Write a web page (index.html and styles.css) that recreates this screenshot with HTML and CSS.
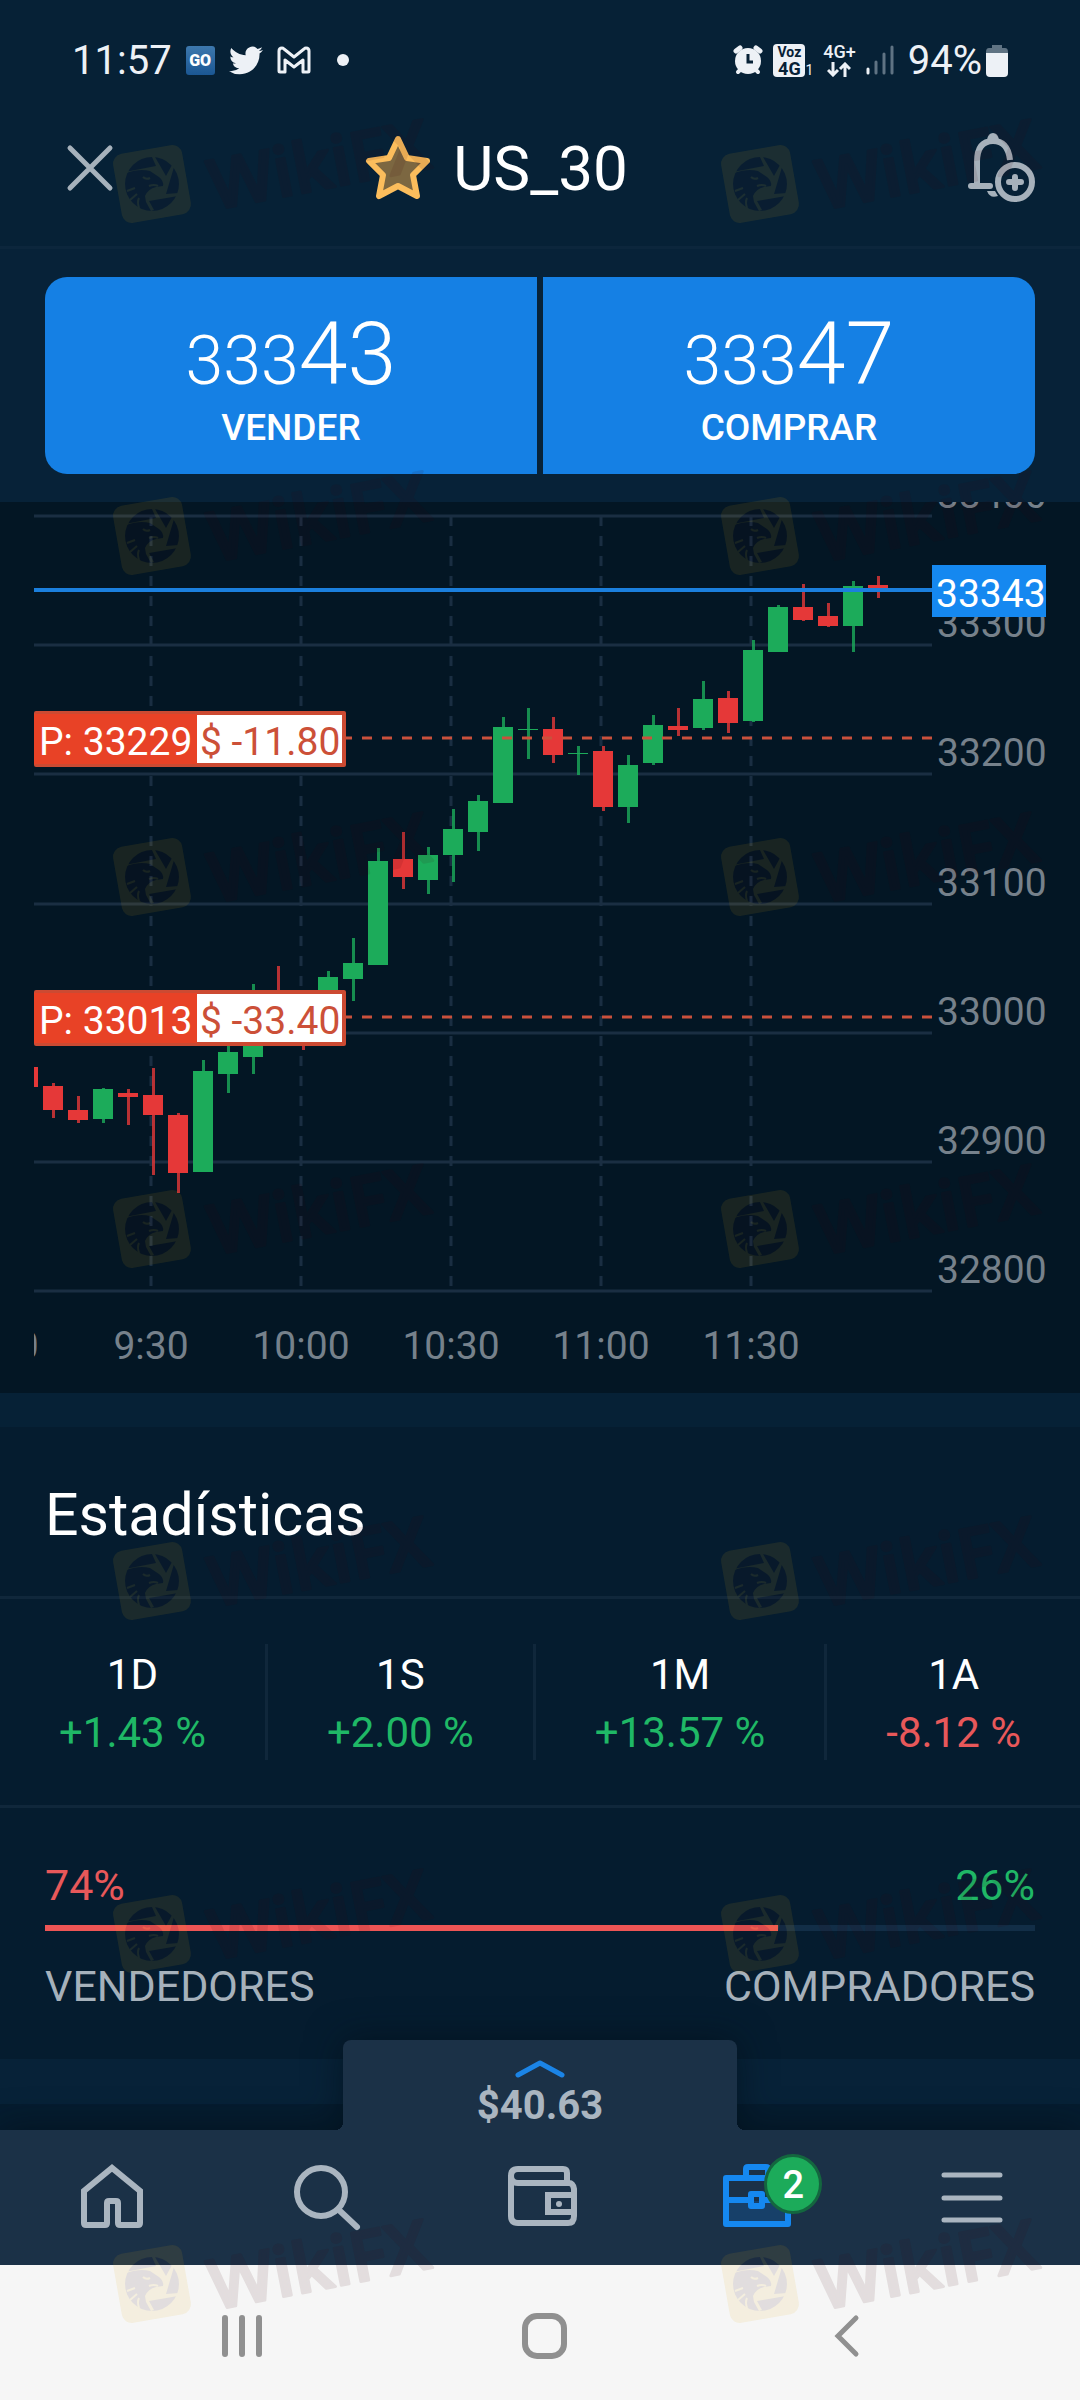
FILE: index.html
```html
<!DOCTYPE html>
<html lang="es">
<head>
    <meta charset="UTF-8">
    <meta name="viewport" content="width=device-width, initial-scale=1.0">
    <title>US_30</title>
    <link rel="stylesheet" href="styles.css">
</head>
<body>
    <div class="status-bar">
        <div class="status-left">
            <span class="clock">11:57</span>
            <span class="go-icon">GO</span>
            <svg class="twitter-icon" viewBox="0 2 24 20" width="34" height="29"><path fill="#edf1f6" d="M23.953 4.57a10 10 0 01-2.825.775 4.958 4.958 0 002.163-2.723c-.951.555-2.005.959-3.127 1.184a4.92 4.92 0 00-8.384 4.482C7.69 8.095 4.067 6.13 1.64 3.162a4.822 4.822 0 00-.666 2.475c0 1.71.87 3.213 2.188 4.096a4.904 4.904 0 01-2.228-.616v.06a4.923 4.923 0 003.946 4.827 4.996 4.996 0 01-2.212.085 4.936 4.936 0 004.604 3.417 9.867 9.867 0 01-6.102 2.105c-.39 0-.779-.023-1.17-.067a13.995 13.995 0 007.557 2.209c9.053 0 13.998-7.496 13.998-13.985 0-.21 0-.42-.015-.63A9.935 9.935 0 0024 4.59z"/></svg>
            <svg class="gmail-icon" viewBox="0 0 34 28" width="34" height="28"><path fill="none" stroke="#edf1f6" stroke-width="3" stroke-linejoin="round" d="M2 5Q2 2 5 2Q6 2 7 3L17 11L27 3Q28 2 29 2Q32 2 32 5V25Q32 26 31 26H26V14L17 21L8 14V26H3Q2 26 2 25Z"/></svg>
            <span class="dot"></span>
        </div>
        <div class="status-right">
            <svg viewBox="0 0 30 30" width="30" height="30"><g fill="none" stroke="#edf1f6" stroke-width="5" stroke-linecap="round"><path d="M3 6L7 3M27 6L23 3"/><path stroke-width="4" d="M5 27L8 24M25 27L22 24"/></g><circle cx="15" cy="16" r="13" fill="#edf1f6"/><path d="M15 9V17H20" fill="none" stroke="#072136" stroke-width="3"/></svg>
            <span class="volte"><span class="volte-box"><span>Voz</span><span>4G</span></span><span class="volte-sim">1</span></span>
            <span class="net">4G+
                <svg viewBox="0 0 24 15" width="24" height="15"><path fill="none" stroke="#edf1f6" stroke-width="3" d="M6 0V13M1 8L6 13L11 8M18 15V2M13 7L18 2L23 7"/></svg>
            </span>
            <svg viewBox="0 0 28 30" width="28" height="30"><g stroke-width="3" stroke-linecap="round"><path stroke="#edf1f6" d="M2 24V28"/><path stroke="#5f7383" d="M10 17V28M18 9V28M26 2V28"/></g></svg>
            <span class="battery-text">94%<svg viewBox="0 0 22 33" width="22" height="33"><path fill="#5f7383" d="M6 1H16V4H19Q22 4 22 8V12H0V8Q0 4 3 4H6Z"/><path fill="#edf1f6" d="M0 9H22V29Q22 33 18 33H4Q0 33 0 29Z"/></svg></span>
        </div>
    </div>

    <header class="header">
        <button class="icon-button" aria-label="Cerrar">
            <svg viewBox="0 0 48 48" width="48" height="48"><path d="M4 4L44 44M44 4L4 44" stroke="#a6b1bb" stroke-width="5" stroke-linecap="round"/></svg>
        </button>
        <h1 class="title">
            <svg viewBox="0 0 66 66" width="66" height="66"><path d="M33 4L42 23L62 26L48 40L52 61L33 51L14 61L18 40L4 26L24 23Z" fill="#7c6741" stroke="#fbbd5c" stroke-width="6" stroke-linejoin="round"/></svg>
            US_30
        </h1>
        <button class="icon-button" aria-label="Crear alerta">
            <svg viewBox="0 0 70 70" width="70" height="70">
                <g fill="none" stroke="#a6b1bb" stroke-linecap="round">
                    <path stroke-width="6" stroke-linecap="butt" d="M43 27Q41 8 26 8Q10 8 10 29V52"/>
                    <path stroke-width="6" d="M4 53H23"/>
                    <circle cx="48" cy="49" r="17" stroke-width="6"/>
                    <path stroke-width="6" d="M48 44V55M42 49H54"/>
                </g>
                <path fill="#a6b1bb" d="M20 7Q21 0 26 0Q31 0 32 7ZM20 58H28L31 63Q23 66 20 58Z"/>
            </svg>
        </button>
    </header>

    <section class="quotes">
        <button class="quote">
            <span class="price">333<b>43</b></span>
            <span class="side">VENDER</span>
        </button>
        <button class="quote">
            <span class="price">333<b>47</b></span>
            <span class="side">COMPRAR</span>
        </button>
    </section>

    <section class="chart-panel">
        <svg id="chart" class="chart" viewBox="0 502 1080 891" role="img" aria-label="US_30">
            <defs>
                <clipPath id="plot"><rect x="34" y="502" width="900" height="891"/></clipPath>
            </defs>
            <g id="grid" class="grid"></g>
            <g id="candles" clip-path="url(#plot)"></g>
            <g id="axis" class="axis"></g>
            <g id="orders"></g>
            <path class="last-line" d="M34 590H932"/>
            <rect x="932" y="565" width="114" height="52" fill="#1588f0"/>
            <text class="last-price" x="936" y="607">33343</text>
        </svg>
    </section>

    <section class="stats">
        <h2>Estadísticas</h2>
        <ul class="periods">
            <li><span>1D</span><span class="up">+1.43 %</span></li>
            <li><span>1S</span><span class="up">+2.00 %</span></li>
            <li><span>1M</span><span class="up">+13.57 %</span></li>
            <li><span>1A</span><span class="down">-8.12 %</span></li>
        </ul>
        <div class="sentiment">
            <div class="sentiment-row"><span class="down">74%</span><span class="up">26%</span></div>
            <div class="track"><div class="track-fill" style="width: 74%"></div></div>
            <div class="sentiment-row muted"><span>VENDEDORES</span><span>COMPRADORES</span></div>
        </div>
    </section>
    <div class="spacer"></div>

    <nav class="tabs">
        <button class="balance">
            <svg viewBox="0 0 50 22" width="50" height="22"><path d="M3 18L25 6L47 18" fill="none" stroke="#1b84e6" stroke-width="5" stroke-linecap="round" stroke-linejoin="round"/></svg>
            $40.63
        </button>
        <a href="#" class="tab" aria-label="Inicio">
            <svg viewBox="0 0 68 68" width="68" height="68"><path d="M6 60V28L34 5L62 28V60Q62 62 60 62H42Q40 62 40 60V40Q40 38 38 38H31Q29 38 29 40V60Q29 62 27 62H8Q6 62 6 60Z" fill="none" stroke="#aab5c0" stroke-width="6"/></svg>
        </a>
        <a href="#" class="tab" aria-label="Buscar">
            <svg viewBox="0 0 68 68" width="68" height="68"><g fill="none" stroke="#aab5c0" stroke-width="6" stroke-linecap="round"><circle cx="28" cy="29" r="24"/><path d="M47 48L64 64"/></g></svg>
        </a>
        <a href="#" class="tab" aria-label="Cartera">
            <svg viewBox="0 0 70 68" width="70" height="68"><g fill="none" stroke="#aab5c0" stroke-width="6"><path d="M60 21V10Q60 6 56 6H11Q4 6 4 13Q4 20 11 20H62Q66 20 67 26V53Q67 60 61 60H11Q4 60 4 53V12"/><path d="M66 32H41V49H66"/></g><circle cx="52" cy="41" r="3" fill="#aab5c0"/></svg>
        </a>
        <a href="#" class="tab" aria-label="Operaciones">
            <svg viewBox="0 0 68 68" width="68" height="68"><path fill="#174069" d="M3 38H65V61H3Z"/><g fill="none" stroke="#1588f0" stroke-width="6" stroke-linejoin="round"><path d="M3 15H65V61H3ZM23 14V6Q23 4 25 4H43Q45 4 45 6V14M3 37H27M41 37H65"/><rect x="28" y="31" width="11" height="12"/></g></svg>
            <span class="badge">2</span>
        </a>
        <a href="#" class="tab" aria-label="Menú">
            <svg viewBox="0 0 68 68" width="68" height="68"><path d="M6 12H62M6 35H62M6 57H62" stroke="#aab5c0" stroke-width="5" stroke-linecap="round"/></svg>
        </a>
    </nav>

    <div class="system-bar">
        <button aria-label="Recientes"><svg viewBox="0 0 48 48" width="48" height="48"><path d="M7 6V42M24 6V42M41 6V42" stroke="#909090" stroke-width="6" stroke-linecap="round"/></svg></button>
        <button aria-label="Inicio"><svg viewBox="0 0 48 48" width="48" height="48"><rect x="5" y="4" width="39" height="40" rx="12" fill="none" stroke="#909090" stroke-width="6"/></svg></button>
        <button aria-label="Atrás"><svg viewBox="0 0 48 48" width="48" height="48"><path d="M34 6L16 24L34 42" fill="none" stroke="#909090" stroke-width="5" stroke-linecap="round"/></svg></button>
    </div>

    <svg class="watermark" viewBox="0 0 1080 2400" aria-hidden="true">
        <defs>
            <g id="mark">
                <rect x="14" y="9" width="70" height="70" rx="10" fill="#e4af14" transform="rotate(-10 49 44)"/>
                <circle cx="49" cy="44" r="27" fill="#2d050a"/>
                <!-- shutter blades and the opening behind the eagle -->
                <path fill="#e4af14" d="M22 32L53 26L49 17L52 17L63 36L69 25L71 27L63 54L76 53L75 56L46 61L51 70L48 71L43 62L42 56Q45 49 53 47L60 46Q61 41 56 37L47 31Q37 28 23 33Z"/>
                <path fill="none" stroke="#e4af14" stroke-width="2" d="M40 37Q43 40 47 38M46 46Q51 44 55 46M24 51L32 48M27 60L34 54M36 68Q34 62 36 58"/>
                <text class="mark-text" x="111" y="70" transform="rotate(-11 111 70)">WikiFX</text>
            </g>
        </defs>
        <g id="marks" opacity="0.1"></g>
    </svg>

    <script src="chart.js"></script>
</body>
</html>
```

FILE: styles.css
```css
* {
    margin: 0;
    padding: 0;
    box-sizing: border-box;
}

body {
    position: relative;
    min-height: 100vh;
    display: flex;
    flex-direction: column;
    font-family: Roboto, "Liberation Sans", sans-serif;
    background-color: #062136;
    color: #fff;
}

button {
    background: none;
    border: none;
    color: inherit;
    font-family: inherit;
    cursor: pointer;
}

a {
    color: inherit;
    text-decoration: none;
}

svg {
    display: block;
}

/* status bar */

.status-bar {
    display: flex;
    justify-content: space-between;
    height: 120px;
    padding: 0 72px;
    color: #edf1f6;
    font-size: 40px;
}

.status-left,
.status-right {
    display: flex;
    align-items: center;
}

.status-left {
    gap: 14px;
}

.status-right {
    gap: 10px;
}

.go-icon {
    width: 29px;
    height: 29px;
    border-radius: 3px;
    background: linear-gradient(#3d78ad, #1b5793);
    color: #fff;
    font-size: 16px;
    font-weight: 900;
    line-height: 29px;
    text-align: center;
}

.dot {
    width: 12px;
    height: 12px;
    margin-left: 12px;
    border-radius: 50%;
    background: #edf1f6;
}

.volte {
    display: flex;
    align-items: flex-end;
}

.volte-box {
    display: flex;
    flex-direction: column;
    align-items: center;
    width: 32px;
    height: 33px;
    border-radius: 4px;
    background: #edf1f6;
    color: #072136;
    font-size: 14px;
    font-weight: 700;
    line-height: 16px;
}

.volte-box span + span {
    font-size: 18px;
    line-height: 17px;
}

.volte-sim {
    font-size: 14px;
    line-height: 14px;
}

.net {
    display: flex;
    flex-direction: column;
    align-items: center;
    gap: 2px;
    font-size: 18px;
    font-weight: 500;
    line-height: 16px;
}

.battery-text {
    display: flex;
    align-items: center;
    gap: 4px;
    margin-left: 4px;
}

/* header */

.header {
    display: flex;
    align-items: center;
    justify-content: space-between;
    height: 129px;
    padding: 0 43px 30px 66px;
    border-bottom: 3px solid #0c263c;
}

.title {
    display: flex;
    align-items: center;
    gap: 22px;
    padding-right: 88px;
    font-size: 62px;
    font-weight: 400;
}

/* buy and sell */

.quotes {
    display: grid;
    grid-template-columns: 1fr 1fr;
    gap: 6px;
    padding: 28px 45px;
    background: #072238;
}

.quote {
    display: flex;
    flex-direction: column;
    align-items: center;
    height: 197px;
    padding-top: 32px;
    background: #1580e4;
}

.quote:first-child {
    border-radius: 22px 0 0 22px;
}

.quote:last-child {
    border-radius: 0 22px 22px 0;
}

.price {
    font-size: 68px;
    font-weight: 300;
    line-height: 90px;
}

.price b {
    font-size: 88px;
    font-weight: 300;
}

.side {
    font-size: 37px;
    font-weight: 500;
    line-height: 44px;
}

/* chart */

.chart-panel {
    background: #031624;
}

.chart {
    width: 100%;
    height: auto;
    font-size: 39px;
}

.grid {
    stroke: #1a2e42;
    stroke-width: 3;
}

.grid .time-line {
    stroke-dasharray: 10 10;
}

.axis {
    fill: #76818b;
}

.axis .time {
    text-anchor: middle;
}

.bull {
    fill: #1cab5a;
}

.bear {
    fill: #e53838;
}

.wick {
    opacity: 0.8;
}

.order-line {
    stroke: #c9513c;
    stroke-width: 3;
    stroke-dasharray: 10 10;
}

.last-line {
    stroke: #1b7fdd;
    stroke-width: 4;
}

.last-price {
    fill: #fff;
}

/* statistics */

.stats {
    margin-top: 34px;
    background: #051c2f;
}

.stats h2 {
    height: 172px;
    padding: 0 45px;
    border-bottom: 3px solid #10273b;
    font-size: 59px;
    font-weight: 400;
    line-height: 176px;
}

.periods {
    display: flex;
    padding: 45px 0;
    border-bottom: 3px solid #10273b;
    list-style: none;
    font-size: 42px;
}

.periods li {
    flex: 1 1 auto;
    display: flex;
    flex-direction: column;
    align-items: center;
    height: 116px;
    padding-top: 2px;
    line-height: 58px;
}

.periods li + li {
    border-left: 3px solid #10273b;
}

.up {
    color: #1fb866;
}

.down {
    color: #e8585a;
}

.sentiment {
    padding: 48px 45px 44px;
    font-size: 43px;
    line-height: 58px;
}

.sentiment-row {
    display: flex;
    justify-content: space-between;
}

.track {
    height: 6px;
    margin: 11px 0 26px;
    background: #122e47;
}

.track-fill {
    height: 100%;
    background: #ee5555;
}

.muted {
    color: #a6b1bb;
}

.spacer {
    flex: 1;
    border-top: 45px solid #072238;
    background: #051c2f;
}

/* bottom navigation */

.tabs {
    position: relative;
    display: grid;
    grid-template-columns: repeat(5, 1fr);
    height: 135px;
    padding: 0 0 2px 4px;
    background: #1b3147;
    filter: drop-shadow(0 0 18px rgba(0, 10, 15, 0.5));
}

.balance {
    position: absolute;
    left: 50%;
    bottom: 100%;
    width: 394px;
    height: 90px;
    margin-left: -197px;
    border-radius: 8px 8px 0 0;
    background: #1b3147;
    color: #aab5c0;
    font-size: 40px;
    font-weight: 700;
    line-height: 44px;
    display: flex;
    flex-direction: column;
    align-items: center;
    padding-top: 17px;
    gap: 5px;
}

/* concave corners where the balance tab meets the bar */
.balance::before,
.balance::after {
    content: "";
    position: absolute;
    bottom: 0;
    width: 8px;
    height: 8px;
}

.balance::before {
    right: 100%;
    background: radial-gradient(circle at 0 0, transparent 8px, #1b3147 8px);
}

.balance::after {
    left: 100%;
    background: radial-gradient(circle at 100% 0, transparent 8px, #1b3147 8px);
}

.tab {
    position: relative;
    display: flex;
    align-items: center;
    justify-content: center;
}

.badge {
    position: absolute;
    left: 50%;
    top: 24px;
    width: 58px;
    height: 60px;
    margin-left: 7px;
    border: 3px solid #14663f;
    border-radius: 50%;
    background: #1cab5a;
    font-size: 38px;
    font-weight: 500;
    line-height: 56px;
    text-align: center;
}

.system-bar {
    position: relative;
    display: grid;
    grid-template-columns: repeat(3, 1fr);
    height: 135px;
    padding: 0 83px 0 91px;
    background: #f6f6f6;
}

.system-bar button {
    display: flex;
    align-items: center;
    justify-content: center;
    padding-top: 6px;
}

/* watermark */

.watermark {
    position: absolute;
    top: 0;
    left: 0;
    width: 100%;
    pointer-events: none;
}

.mark-text {
    fill: #3c080c;
    stroke: #3c080c;
    stroke-width: 3;
    stroke-linejoin: round;
    font-family: "Open Sans", sans-serif;
    font-size: 69px;
    font-weight: 600;
}
```

FILE: chart.js
```javascript
// x, wick top, body top, body bottom, wick bottom, direction
const candles = [
    [28, 1067, 1067, 1087, 1087, "bear"],
    [53, 1083, 1086, 1110, 1118, "bear"],
    [78, 1096, 1110, 1120, 1123, "bear"],
    [103, 1088, 1089, 1119, 1123, "bull"],
    [128, 1089, 1093, 1097, 1125, "bear"],
    [153, 1068, 1095, 1115, 1175, "bear"],
    [178, 1113, 1115, 1173, 1193, "bear"],
    [203, 1060, 1071, 1172, 1172, "bull"],
    [228, 1040, 1052, 1074, 1093, "bull"],
    [253, 984, 1010, 1057, 1074, "bull"],
    [278, 966, 1005, 1030, 1040, "bear"],
    [303, 1000, 1010, 1035, 1050, "bear"],
    [328, 971, 977, 1020, 1030, "bull"],
    [353, 938, 963, 979, 1001, "bull"],
    [378, 848, 861, 965, 965, "bull"],
    [403, 832, 859, 877, 889, "bear"],
    [428, 847, 855, 880, 894, "bull"],
    [453, 809, 829, 855, 882, "bull"],
    [478, 795, 801, 832, 851, "bull"],
    [503, 717, 727, 803, 803, "bull"],
    [528, 708, 729, 730, 759, "bull"],
    [553, 717, 729, 755, 763, "bear"],
    [578, 746, 753, 754, 775, "bull"],
    [603, 746, 751, 807, 811, "bear"],
    [628, 755, 765, 807, 823, "bull"],
    [653, 715, 725, 763, 765, "bull"],
    [678, 708, 726, 730, 736, "bear"],
    [703, 681, 699, 728, 730, "bull"],
    [728, 691, 698, 723, 733, "bear"],
    [753, 640, 650, 721, 722, "bull"],
    [778, 605, 607, 652, 652, "bull"],
    [803, 584, 607, 620, 621, "bear"],
    [828, 603, 616, 626, 627, "bear"],
    [853, 581, 586, 626, 652, "bull"],
    [878, 576, 585, 588, 598, "bear"]
];

const orders = [
    { y: 738, price: "P: 33229", profit: "$ -11.80" },
    { y: 1017, price: "P: 33013", profit: "$ -33.40" }
];

const times = ["9:00", "9:30", "10:00", "10:30", "11:00", "11:30"];

let grid = "";
let axis = "";

for (let i = 0; i <= 6; i++) {
    const y = Math.round(516 + i * 129.2);
    grid += `<path d="M34 ${y}H932"/>`;
    axis += `<text x="937" y="${y - 8}">${33400 - i * 100}</text>`;
}

times.forEach((time, i) => {
    const x = 1 + i * 150;
    if (i > 0) {
        grid += `<path class="time-line" d="M${x} 516V1291"/>`;
    }
    axis += `<text class="time" x="${x}" y="1359" clip-path="url(#plot)">${time}</text>`;
});

document.getElementById("grid").innerHTML = grid;
document.getElementById("axis").innerHTML = axis;

document.getElementById("candles").innerHTML = candles.map(([x, high, top, bottom, low, type]) => `
    <g class="${type}">
        <rect class="wick" x="${x - 1}" y="${high}" width="3" height="${low - high}"/>
        <rect x="${x - 10}" y="${top}" width="20" height="${bottom - top}"/>
    </g>
`).join("");

document.getElementById("orders").innerHTML = orders.map(order => `
    <path class="order-line" d="M342 ${order.y}H932"/>
    <rect x="34" y="${order.y - 27}" width="312" height="56" rx="2" fill="#cc4a32"/>
    <rect x="34" y="${order.y - 24}" width="163" height="50" fill="#e84226"/>
    <rect x="197" y="${order.y - 23}" width="145" height="48" fill="#fff"/>
    <text x="39" y="${order.y + 17}" fill="#fff">${order.price}</text>
    <text x="200" y="${order.y + 17}" fill="#cc5038">${order.profit}</text>
`).join("");

let marks = "";
[140, 492, 833, 1185, 1537, 1890, 2240].forEach(y => {
    marks += `<use href="#mark" x="103" y="${y}"/><use href="#mark" x="711" y="${y}"/>`;
});
document.getElementById("marks").innerHTML = marks;
```
